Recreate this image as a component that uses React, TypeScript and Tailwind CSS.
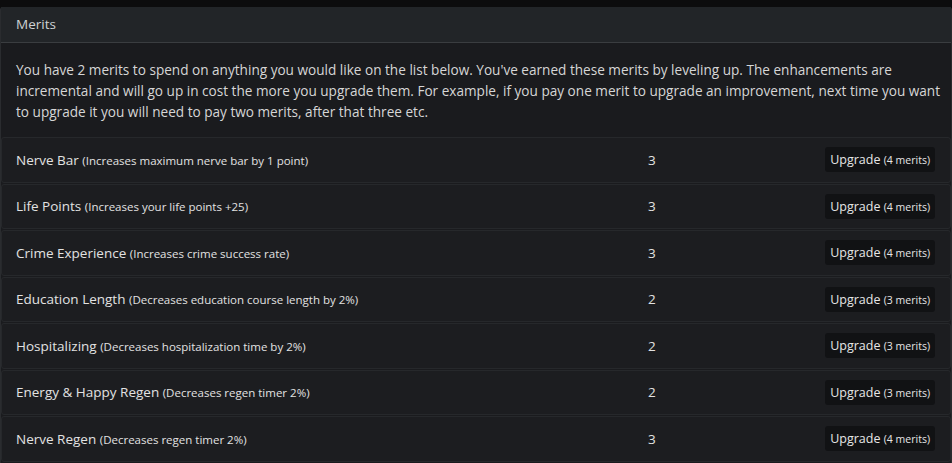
import React from 'react'

type Merit = {
  name: string
  desc: string
  level: number
  cost: number
}

const merits: Merit[] = [
  { name: 'Nerve Bar', desc: 'Increases maximum nerve bar by 1 point', level: 3, cost: 4 },
  { name: 'Life Points', desc: 'Increases your life points +25', level: 3, cost: 4 },
  { name: 'Crime Experience', desc: 'Increases crime success rate', level: 3, cost: 4 },
  { name: 'Education Length', desc: 'Decreases education course length by 2%', level: 2, cost: 3 },
  { name: 'Hospitalizing', desc: 'Decreases hospitalization time by 2%', level: 2, cost: 3 },
  { name: 'Energy & Happy Regen', desc: 'Decreases regen timer 2%', level: 2, cost: 3 },
  { name: 'Nerve Regen', desc: 'Decreases regen timer 2%', level: 3, cost: 4 }
]

const MeritRow = ({ name, desc, level, cost }: Merit) => {
  return (
    <div className="h-[45.5px] flex items-center bg-[#1c1d20] rounded-[3px] border border-[#26282b] pl-[14px] pr-[15px]">
      <div className="w-[632px] text-[13.5px] text-[#e2e2e2]">
        {name} <span className="text-[11.5px]">({desc})</span>
      </div>
      <div className="w-[40px] text-[13.5px] text-[#e2e2e2]">{level}</div>
      <div className="flex-1 flex justify-end">
        <button className="h-[25px] px-[5px] pt-[2px] bg-[#111214] rounded-[3px] text-[12.5px] text-[#e6e6e6]">
          Upgrade <span className="text-[10.5px]">({cost} merits)</span>
        </button>
      </div>
    </div>
  )
}

export default function App() {
  return (
    <div className="w-[952px] h-[463px] overflow-hidden bg-[#0c0c0d] pt-[7px] font-['Open_Sans',sans-serif]">
      <div className="h-full bg-[#1a1b1e] rounded-t-[3px] border-x border-[#2a2c2f]">
        <div className="h-[36px] bg-[#222528] border-b border-[#3a3d40] flex items-center px-[15px] text-[13.5px] text-[#cfd2d4]">
          Merits
        </div>
        <p className="pl-[15px] pr-[2px] pt-[16px] pb-[15px] text-[13.6px] leading-[21px] text-[#d6d6d6]">
          You have 2 merits to spend on anything you would like on the list below. You've earned these merits by leveling up. The enhancements are incremental and will go up in cost the more you upgrade them. For example, if you pay one merit to upgrade an improvement, next time you want to upgrade it you will need to pay two merits, after that three etc.
        </p>
        <div className="flex flex-col gap-px">
          {merits.map((m) => (
            <MeritRow key={m.name} {...m} />
          ))}
        </div>
      </div>
    </div>
  )
}
